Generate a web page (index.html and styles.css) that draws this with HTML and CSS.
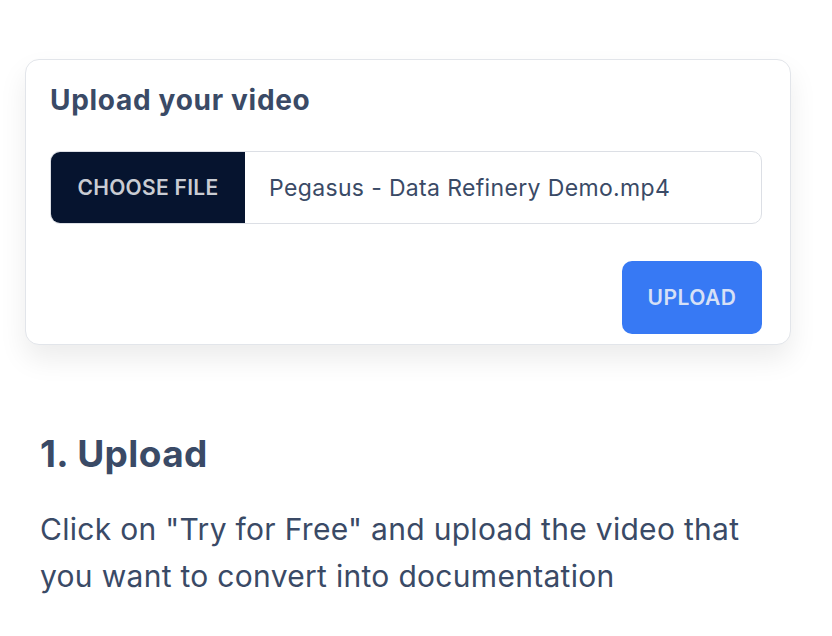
FILE: index.html
```html
<!DOCTYPE html>
<html lang="en">
<head>
  <meta charset="UTF-8">
  <meta name="viewport" content="width=device-width, initial-scale=1.0">
  <title>Upload your video</title>
  <link rel="stylesheet" href="styles.css">
</head>
<body>
  <div class="page">
    <div class="card">
      <h2 class="card-title">Upload your video</h2>
      <div class="file-input">
        <span class="file-btn">Choose file</span>
        <span class="file-name">Pegasus - Data Refinery Demo.mp4</span>
      </div>
      <div class="actions">
        <button type="button" class="upload-btn">Upload</button>
      </div>
    </div>
    <div class="step">
      <h1 class="step-title">1. Upload</h1>
      <p class="step-text">Click on "Try for Free" and upload the video that you want to convert into documentation</p>
    </div>
  </div>
</body>
</html>
```

FILE: styles.css
```css
body {
  margin: 0;
  font-family: Inter, "Noto Sans", sans-serif;
  background-color: #fff;
  color: #334155;
}
.page {
  padding: 59px 41px 0 25px;
}
.card {
  background-color: #fff;
  border: 1px solid #e2e5ea;
  border-radius: 14px;
  padding: 23px 28px 10px 24px;
  box-shadow: 0 14px 28px rgba(0, 0, 0, 0.08);
}
.card-title {
  margin: 0 0 34px 0;
  font-size: 28px;
  font-weight: 700;
  letter-spacing: 0.7px;
  color: #3a4a66;
  line-height: 34px;
}
.file-input {
  display: flex;
  height: 71px;
  border: 1px solid #dcdfe5;
  border-radius: 10px;
  overflow: hidden;
}
.file-btn {
  display: flex;
  align-items: center;
  justify-content: center;
  width: 194px;
  background-color: #06142f;
  color: #c9ccd3;
  font-size: 21px;
  font-weight: 600;
  letter-spacing: 0.3px;
  text-transform: uppercase;
}
.file-name {
  display: flex;
  align-items: center;
  padding-left: 24px;
  font-size: 23px;
  letter-spacing: 0.35px;
  color: #3a4a66;
}
.actions {
  display: flex;
  justify-content: flex-end;
  margin-top: 37px;
}
.upload-btn {
  width: 140px;
  height: 73px;
  background-color: #3779f4;
  color: #d6e0f6;
  border: none;
  border-radius: 10px;
  font-family: inherit;
  font-size: 21px;
  font-weight: 600;
  letter-spacing: 0.5px;
  text-transform: uppercase;
  cursor: pointer;
}
.step {
  padding: 87px 0 0 15px;
}
.step-title {
  margin: 0 0 30px 0;
  font-size: 37px;
  font-weight: 700;
  letter-spacing: 0.4px;
  color: #3a4a66;
  line-height: 44px;
}
.step-text {
  margin: 0;
  font-size: 30px;
  letter-spacing: 0.3px;
  line-height: 47px;
  color: #3a4a66;
}
```
